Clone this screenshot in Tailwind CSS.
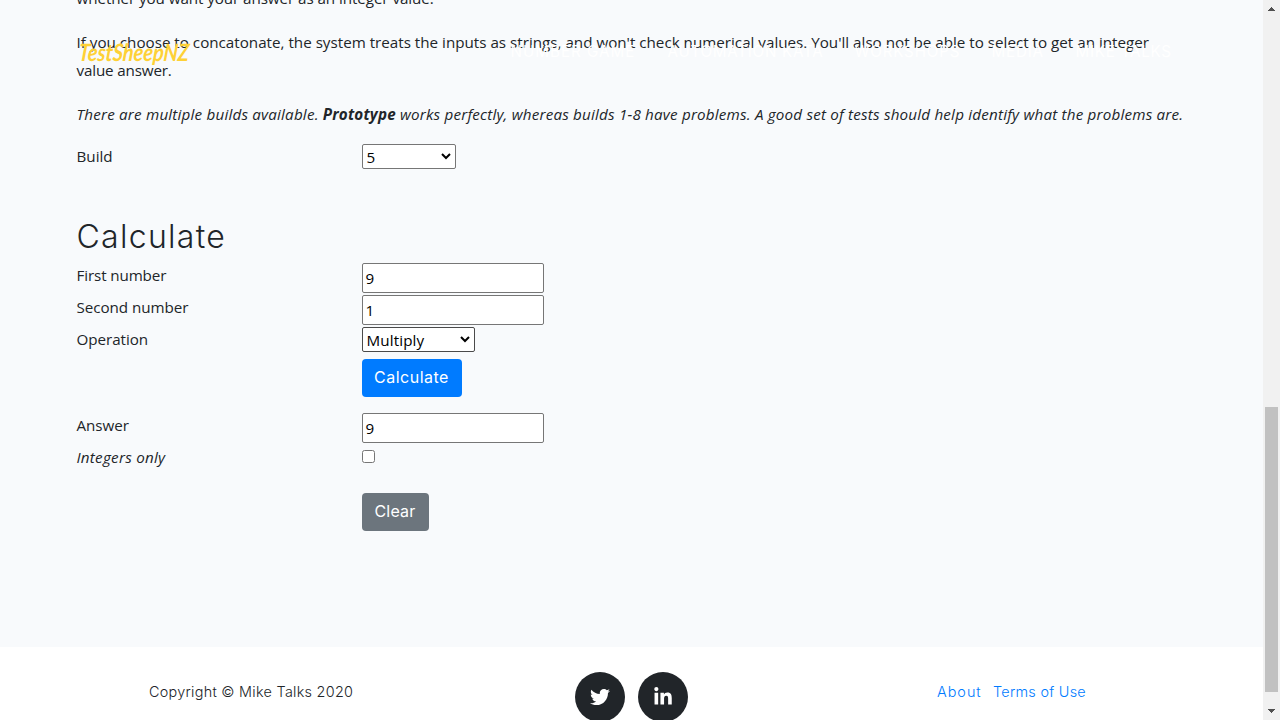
<!DOCTYPE html>
<html lang="en">
<head>
<meta charset="utf-8">
<title>TestSheepNZ</title>
<script src="https://cdn.jsdelivr.net/npm/@tailwindcss/browser@4"></script>
</head>
<body class="relative flex h-[720px] w-[1280px] overflow-hidden bg-white font-['Open_Sans',sans-serif] text-[15.2px] text-[#212529]">
  <nav class="absolute top-[34px] left-[76.5px] z-10 flex h-9 w-[1110px] items-center whitespace-nowrap text-white">
    <a class="ml-0.5 w-[110px] origin-left scale-x-[.83] -skew-x-6 font-['Lato',sans-serif] text-[24px] leading-9 font-bold text-[#fed136] italic">TestSheepNZ</a>
    <ul class="flex font-['Inter',sans-serif] text-[15.2px] leading-6">
      <li class="ml-[322px] w-[157px] tracking-[1px]">NUMBER GAME</li>
      <li class="w-[187px] tracking-[.73px]">AUTOMATION KATA</li>
      <li class="w-[137px] tracking-[.8px]">WORKSHOPS</li>
      <li class="w-[84px] tracking-[.8px]">MEDIA</li>
      <li class="tracking-[.75px]">MIKE TALKS</li>
    </ul>
  </nav>

  <div class="flex h-full w-[1263px] flex-col">
    <main class="h-[647px] shrink-0 bg-[#f8fafc] px-[76.5px]">
      <div class="-mt-4 leading-7 whitespace-nowrap">
        <p class="mb-4 tracking-[-.07px]">whether you want your answer as an integer value.</p>
        <p class="mb-4">If you choose to concatonate, the system treats the inputs as strings, and won't check numerical values. You'll also not be able to select to get an integer<br><span class="tracking-[-.15px]">value answer.</span></p>
        <p class="mb-4 tracking-[.195px] italic">There are multiple builds available. <b>Prototype</b> works perfectly, whereas builds 1-8 have problems. A good set of tests should help identify what the problems are.</p>
      </div>

      <div class="grid grid-cols-[285px_1fr] leading-[25px]">
        <label class="h-8">Build</label>
        <div class="flex h-[25px] w-[94px] items-center justify-between rounded-[2px] border border-[#767676] bg-white px-1 text-black">
          <span class="mt-px">5</span>
          <svg class="mt-[-2px] size-[10px]" viewBox="0 0 10 10" fill="none" stroke="#000" stroke-width="2"><path d="M1 3l4 4 4-4"/></svg>
        </div>
      </div>

      <h2 class="mt-[41px] mb-2 h-[38px] font-['Inter',sans-serif] text-[32px] leading-[40px] font-light tracking-[1.3px]">Calculate</h2>

      <div class="grid grid-cols-[285px_1fr] leading-6 tracking-[-.05px]">
        <label class="h-8 tracking-[-.12px]">First number</label>
        <div class="h-[30px] w-[182px] rounded-[2px] border border-[#767676] bg-white pl-[3px] leading-7 text-black"><span>9</span></div>
        <label class="h-8">Second number</label>
        <div class="h-[30px] w-[182px] rounded-[2px] border border-[#767676] bg-white pl-[3px] leading-7 text-black"><span>1</span></div>
        <label class="h-8">Operation</label>
        <div class="flex h-[25px] w-[113px] items-center justify-between rounded-[2px] border border-[#4a4a4a] bg-white px-1 text-black">
          <span class="mt-px tracking-[.12px]">Multiply</span>
          <svg class="mt-[-2px] size-[10px]" viewBox="0 0 10 10" fill="none" stroke="#000" stroke-width="2"><path d="M1 3l4 4 4-4"/></svg>
        </div>
        <button class="col-start-2 mb-4 h-[38px] w-[100px] rounded bg-[#007bff] pb-0.5 font-['Inter',sans-serif] text-base tracking-[.5px] text-white">Calculate</button>
        <label class="h-8">Answer</label>
        <div class="h-[30px] w-[182px] rounded-[2px] border border-[#767676] bg-white pl-[3px] leading-7 text-black"><span>9</span></div>
        <label class="h-8 tracking-[.25px] italic">Integers only</label>
        <div class="mt-[5px] size-[13px] rounded-[2.5px] border border-[#767676] bg-white"></div>
        <button class="col-start-2 mt-4 h-[38px] w-[67px] rounded bg-[#6c757d] pb-0.5 font-['Inter',sans-serif] text-base tracking-[.2px] text-white">Clear</button>
      </div>
    </main>

    <footer class="flex h-[98px] shrink-0 pt-[25px] font-['Inter',sans-serif] text-[14.4px] leading-10 font-light whitespace-nowrap">
      <span class="ml-[149px] w-[426px] tracking-[.28px]">Copyright © Mike Talks 2020</span>
      <a class="mr-[13px] flex size-[50px] items-center justify-center rounded-full bg-[#212529]">
        <svg class="size-5" viewBox="0 0 512 512" fill="#fff"><path d="M459.37 151.716c.325 4.548.325 9.097.325 13.645 0 138.72-105.583 298.558-298.558 298.558-59.452 0-114.68-17.219-161.137-47.106 8.447.974 16.568 1.299 25.34 1.299 49.055 0 94.213-16.568 130.274-44.832-46.132-.975-84.792-31.188-98.112-72.772 6.498.974 12.995 1.624 19.818 1.624 9.421 0 18.843-1.3 27.614-3.573-48.081-9.747-84.143-51.98-84.143-102.985v-1.299c13.969 7.797 30.214 12.67 47.431 13.319-28.264-18.843-46.781-51.005-46.781-87.391 0-19.492 5.197-37.36 14.294-52.954 51.655 63.675 129.3 105.258 216.365 109.807-1.624-7.797-2.599-15.918-2.599-24.04 0-57.828 46.782-104.934 104.934-104.934 30.213 0 57.502 12.67 76.67 33.137 23.715-4.548 46.456-13.32 66.599-25.34-7.798 24.366-24.366 44.833-46.132 57.827 21.117-2.273 41.584-8.122 60.426-16.243-14.292 20.791-32.161 39.308-52.628 54.253z"/></svg>
      </a>
      <a class="flex size-[50px] items-center justify-center rounded-full bg-[#212529]">
        <svg class="h-5 w-[18px]" viewBox="0 0 448 512" fill="#fff"><path d="M100.28 448H7.4V148.9h92.88zM53.79 108.1C24.09 108.1 0 83.5 0 53.8a53.79 53.79 0 0 1 107.58 0c0 29.7-24.1 54.3-53.79 54.3zM447.9 448h-92.68V302.4c0-34.7-.7-79.2-48.29-79.2-48.29 0-55.69 37.7-55.69 76.7V448h-92.78V148.9h89.08v40.8h1.3c12.4-23.5 42.69-48.3 87.88-48.3 94 0 111.28 61.9 111.28 142.3V448z"/></svg>
      </a>
      <a class="ml-[249px] w-14 tracking-[1px] text-[#007bff]">About</a>
      <a class="tracking-[.28px] text-[#007bff]">Terms of Use</a>
    </footer>
  </div>

  <aside class="flex h-full w-[17px] flex-col items-center bg-[#f1f1f1]">
    <svg class="h-[17px] w-[17px]" viewBox="0 0 17 17" fill="#505050" shape-rendering="crispEdges"><path d="M5 11h7v-1h-1v-1h-1v-1h-1v-1h-1v1h-1v1h-1v1h-1z"/></svg>
    <div class="mt-[390px] h-[285px] w-[13px] bg-[#c1c1c1]"></div>
    <svg class="mt-[11px] h-[17px] w-[17px]" viewBox="0 0 17 17" fill="#505050" shape-rendering="crispEdges"><path d="M5 6h7v1h-1v1h-1v1h-1v1h-1v-1h-1v-1h-1v-1h-1z"/></svg>
  </aside>
</body>
</html>
